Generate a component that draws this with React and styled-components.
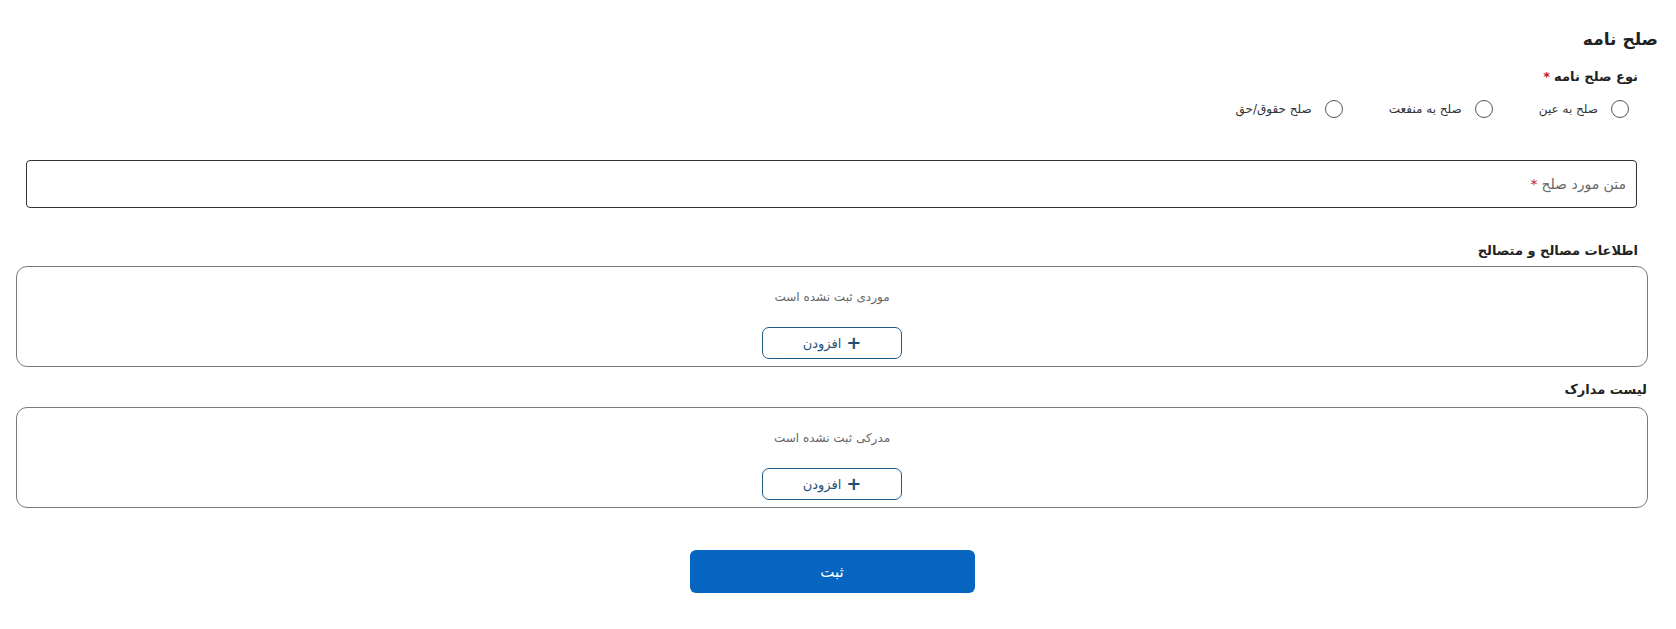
import React, { useState } from 'react'
import styled, { createGlobalStyle } from 'styled-components'

const GlobalStyle = createGlobalStyle`
  body {
    margin: 0;
    background: #fff;
    font-family: "DejaVu Sans", "Noto Sans", sans-serif;
    color: #222;
  }
`

const Page = styled.div`
  direction: rtl;
  padding: 27px 18px 36px 16px;
`

const Title = styled.h2`
  margin: 0;
  font-size: 17px;
  line-height: 24px;
  font-weight: bold;
  color: #222;
`

const FieldGroup = styled.div`
  margin-top: 16px;
  padding-right: 20px;
`

const Label = styled.div`
  font-size: 13px;
  line-height: 20px;
  font-weight: bold;
  color: #222;
`

const Star = styled.span`
  color: #c4161c;
  margin-right: 4px;
`

const RadioRow = styled.div`
  display: flex;
  gap: 46px;
  margin-top: 12px;
  padding-right: 9px;
  height: 20px;
  align-items: center;
`

const RadioItem = styled.label`
  display: flex;
  align-items: center;
  gap: 13px;
  font-size: 12px;
  color: #333;
  cursor: pointer;
`

const Circle = styled.span`
  width: 16px;
  height: 16px;
  border-radius: 50%;
  border: 1.5px solid #555;
  display: flex;
  align-items: center;
  justify-content: center;

  &::after {
    content: '';
    width: 8px;
    height: 8px;
    border-radius: 50%;
    background: ${({ $on }) => ($on ? '#0565c0' : 'transparent')};
  }
`

const TextBox = styled.div`
  margin: 41px 21px 0 10px;
  height: 48px;
  border: 1.5px solid #333;
  border-radius: 4px;
  box-sizing: border-box;
  display: flex;
  align-items: center;
  padding-right: 10px;
  font-size: 14px;
  color: #666;
`

const Section = styled.div`
  margin: ${({ $top }) => $top}px 10px 0 0;
`

const SectionLabel = styled(Label)`
  padding-right: ${({ $inset }) => $inset}px;
  margin-bottom: ${({ $gap }) => $gap}px;
`

const Panel = styled.div`
  height: 101px;
  box-sizing: border-box;
  border: 1.5px solid #7a7a7a;
  border-radius: 11px;
  display: flex;
  flex-direction: column;
  align-items: center;
  padding-top: 20px;
`

const EmptyText = styled.div`
  font-size: 12px;
  line-height: 20px;
  color: #666;
`

const AddButton = styled.button`
  margin-top: 20px;
  width: 140px;
  height: 32px;
  background: #fff;
  border: 1.5px solid #1f5a86;
  border-radius: 7px;
  color: #1f4f78;
  font-family: inherit;
  font-size: 13px;
  display: flex;
  align-items: center;
  justify-content: center;
  gap: 5px;
  cursor: pointer;
`

const Plus = styled.span`
  font-size: 18px;
  font-weight: bold;
  line-height: 1;
`

const Footer = styled.div`
  margin: 42px 10px 0 0;
  display: flex;
  justify-content: center;
`

const SubmitButton = styled.button`
  width: 285px;
  height: 43px;
  border: none;
  border-radius: 6px;
  background: #0565c0;
  color: #fff;
  font-family: inherit;
  font-size: 15px;
  cursor: pointer;
`

const options = ['صلح به عین', 'صلح به منفعت', 'صلح حقوق/حق']

function ListSection({ title, empty, top, inset, gap }) {
  return (
    <Section $top={top}>
      <SectionLabel $inset={inset} $gap={gap}>
        {title}
      </SectionLabel>
      <Panel>
        <EmptyText>{empty}</EmptyText>
        <AddButton type="button">
          <Plus>+</Plus>
          افزودن
        </AddButton>
      </Panel>
    </Section>
  )
}

export default function App() {
  const [kind, setKind] = useState(null)

  return (
    <Page>
      <GlobalStyle />
      <Title>صلح نامه</Title>
      <FieldGroup>
        <Label>
          نوع صلح نامه
          <Star>*</Star>
        </Label>
        <RadioRow>
          {options.map((o) => (
            <RadioItem key={o} onClick={() => setKind(o)}>
              <Circle $on={kind === o} />
              {o}
            </RadioItem>
          ))}
        </RadioRow>
      </FieldGroup>
      <TextBox>
        متن مورد صلح
        <Star>*</Star>
      </TextBox>
      <ListSection
        title="اطلاعات مصالح و متصالح"
        empty="موردی ثبت نشده است"
        top={33}
        inset={10}
        gap={5}
      />
      <ListSection
        title="لیست مدارک"
        empty="مدرکی ثبت نشده است"
        top={13}
        inset={1}
        gap={7}
      />
      <Footer>
        <SubmitButton type="button">ثبت</SubmitButton>
      </Footer>
    </Page>
  )
}
